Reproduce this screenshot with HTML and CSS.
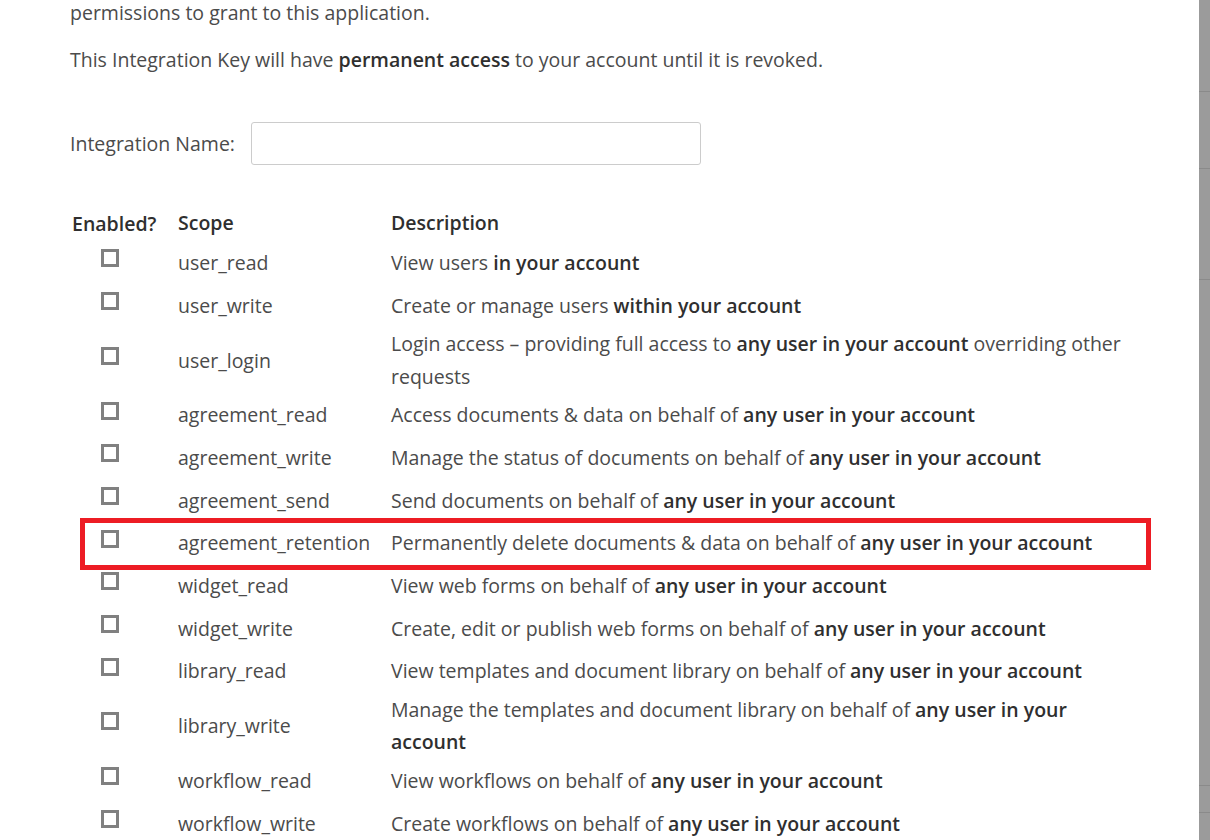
FILE: index.html
```html
<!DOCTYPE html>
<html lang="en">
<head>
<meta charset="utf-8">
<title>Integration Key</title>
<link rel="stylesheet" href="styles.css">
</head>
<body>
<div class="page">
  <main class="content">
    <p class="intro first">permissions to grant to this application.</p>
    <p class="intro">This Integration Key will have <b>permanent access</b> to your account until it is revoked.</p>

    <div class="name-row">
      <label class="name-label" for="iname">Integration Name:</label>
      <input class="name-input" id="iname" type="text">
    </div>

    <div class="scopes">
      <div class="row head">
        <div class="c-en">Enabled?</div>
        <div class="c-scope">Scope</div>
        <div class="c-desc">Description</div>
      </div>
      <div class="row"><div class="c-en"><span class="cb"></span></div><div class="c-scope">user_read</div><div class="c-desc">View users <b>in your account</b></div></div>
      <div class="row"><div class="c-en"><span class="cb"></span></div><div class="c-scope">user_write</div><div class="c-desc">Create or manage users <b>within your account</b></div></div>
      <div class="row"><div class="c-en"><span class="cb"></span></div><div class="c-scope">user_login</div><div class="c-desc">Login access – providing full access to <b>any user in your account</b> overriding other requests</div></div>
      <div class="row"><div class="c-en"><span class="cb"></span></div><div class="c-scope">agreement_read</div><div class="c-desc">Access documents &amp; data on behalf of <b>any user in your account</b></div></div>
      <div class="row"><div class="c-en"><span class="cb"></span></div><div class="c-scope">agreement_write</div><div class="c-desc">Manage the status of documents on behalf of <b>any user in your account</b></div></div>
      <div class="row"><div class="c-en"><span class="cb"></span></div><div class="c-scope">agreement_send</div><div class="c-desc">Send documents on behalf of <b>any user in your account</b></div></div>
      <div class="row marked"><div class="c-en"><span class="cb"></span></div><div class="c-scope">agreement_retention</div><div class="c-desc">Permanently delete documents &amp; data on behalf of <b>any user in your account</b></div></div>
      <div class="row"><div class="c-en"><span class="cb"></span></div><div class="c-scope">widget_read</div><div class="c-desc">View web forms on behalf of <b>any user in your account</b></div></div>
      <div class="row"><div class="c-en"><span class="cb"></span></div><div class="c-scope">widget_write</div><div class="c-desc">Create, edit or publish web forms on behalf of <b>any user in your account</b></div></div>
      <div class="row"><div class="c-en"><span class="cb"></span></div><div class="c-scope">library_read</div><div class="c-desc">View templates and document library on behalf of <b>any user in your account</b></div></div>
      <div class="row"><div class="c-en"><span class="cb"></span></div><div class="c-scope">library_write</div><div class="c-desc">Manage the templates and document library on behalf of <b>any user in your account</b></div></div>
      <div class="row"><div class="c-en"><span class="cb"></span></div><div class="c-scope">workflow_read</div><div class="c-desc">View workflows on behalf of <b>any user in your account</b></div></div>
      <div class="row"><div class="c-en"><span class="cb"></span></div><div class="c-scope">workflow_write</div><div class="c-desc">Create workflows on behalf of <b>any user in your account</b></div></div>
    </div>
  </main>
  <aside class="strip">
    <div class="seg s1"></div>
    <div class="seg s2"></div>
    <div class="seg s3"></div>
    <div class="seg s4"></div>
    <div class="seg s5"></div>
    <div class="seg s6"></div>
  </aside>
</div>
</body>
</html>
```

FILE: styles.css
```css
html, body {
  margin: 0;
  padding: 0;
  background: #ffffff;
  height: 100%;
  overflow: hidden;
}
body {
  font-family: "Open Sans", "Liberation Sans", sans-serif;
  font-size: 19.5px;
  color: #4b4b4b;
}
b {
  font-weight: 600;
  color: #2f2f2f;
}
.page {
  display: flex;
  height: 840px;
}
.content {
  flex: 1;
  padding-left: 70px;
  overflow: hidden;
}
.intro {
  margin: 17px 0 0;
  line-height: 30px;
}
.intro.first {
  margin-top: -2px;
}
.name-row {
  display: flex;
  align-items: center;
  gap: 16px;
  margin-top: 47px;
}
.name-label {
  line-height: 30px;
}
.name-input {
  box-sizing: border-box;
  width: 450px;
  height: 43px;
  border: 1px solid #cccccc;
  border-radius: 3px;
  background: #fff;
  margin: 0;
  padding: 0 10px;
  font: inherit;
}
.scopes {
  margin-top: 39px;
  margin-left: 1px;
  width: 1065px;
}
.row {
  display: grid;
  grid-template-columns: 107px 213px 744px;
  align-items: center;
  min-height: 42.67px;
  position: relative;
}
.row.head {
  min-height: 38px;
  font-weight: 600;
  color: #2f2f2f;
}
.c-en {
  display: flex;
  padding-left: 30px;
}
.head .c-en {
  padding-left: 1px;
}
.c-scope {
  line-height: 32.5px;
}
.c-desc {
  line-height: 32.5px;
  padding: 1px 0;
}
.cb {
  display: block;
  box-sizing: border-box;
  width: 18px;
  height: 18px;
  border: 3px solid #808080;
  background: #fff;
  margin-bottom: 10px;
}
.row.marked::after {
  content: "";
  position: absolute;
  left: 9px;
  top: -4px;
  width: 1071px;
  height: 52px;
  box-sizing: border-box;
  border: 5px solid #ed1c24;
  pointer-events: none;
}
.strip {
  width: 11px;
  flex: none;
  display: flex;
  flex-direction: column;
  background: #9b9b9b;
}
.seg {
  border-bottom: 1px solid #8a8a8a;
  box-sizing: border-box;
}
.s1 { height: 92px; }
.s2 { height: 77px; }
.s3 { height: 111px; }
.s4 { height: 506px; }
.s5 { height: 27px; }
.s6 { flex: 1; border-bottom: 0; }
```
